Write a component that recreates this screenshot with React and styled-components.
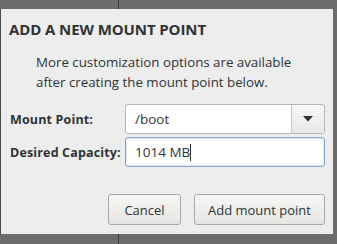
import React from 'react';
import styled, { createGlobalStyle } from 'styled-components';

const GlobalStyle = createGlobalStyle`
    html, body {
        margin: 0;
        padding: 0;
    }
    body {
        width: 337px;
        height: 244px;
        overflow: hidden;
        font-family: 'Open Sans', 'DejaVu Sans', sans-serif;
        background: linear-gradient(
            to right,
            #6d6d6d 0,
            #6d6d6d 118px,
            #3c3c3c 118px,
            #3c3c3c 119px,
            #6d6d6d 119px
        );
    }
`;

const Page = styled.div`
    padding-top: 9px;
    height: 244px;
    box-sizing: border-box;
`;

const Dialog = styled.div`
    width: 333px;
    height: 225px;
    box-sizing: border-box;
    background: #ededed;
    border-left: 1px solid #4a4a4a;
    display: flex;
    flex-direction: column;
    padding: 11px 8px 0 8px;
    color: #2e3436;
`;

const Title = styled.h1`
    margin: 0;
    font-size: 15px;
    line-height: 18px;
    font-weight: 700;
    letter-spacing: -0.1px;
    color: #2e3436;
`;

const Message = styled.p`
    margin: 14px 0 0 27px;
    font-size: 13.3px;
    line-height: 20px;
    color: #2e3436;
`;

const Form = styled.div`
    display: grid;
    grid-template-columns: 116px 200px;
    row-gap: 3px;
    margin-top: 12px;
    align-items: center;
`;

const Label = styled.label`
    font-size: 12.5px;
    font-weight: 700;
    letter-spacing: 0.15px;
    padding-left: 1px;
    white-space: nowrap;
`;

const Field = styled.div`
    height: 30px;
    box-sizing: border-box;
    border: 1px solid ${(p) => (p.$focused ? '#7fa7d6' : '#b6b6b3')};
    border-radius: 3px;
    background: #fff;
    display: flex;
    align-items: center;
    font-size: 13.5px;
    color: #2e3436;
    box-shadow: ${(p) => (p.$focused ? 'inset 0 0 0 1px #dce8f5' : 'none')};
`;

const FieldText = styled.span`
    flex: 1;
    padding-left: 9px;
`;

const Caret = styled.span`
    display: inline-block;
    width: 1px;
    height: 17px;
    background: #2e3436;
    vertical-align: middle;
    margin-top: -2px;
`;

const ComboButton = styled.div`
    width: 32px;
    align-self: stretch;
    border-left: 1px solid #c8c8c5;
    background: linear-gradient(#f6f6f5, #e8e8e7);
    border-radius: 0 3px 3px 0;
    display: flex;
    align-items: center;
    justify-content: center;
`;

const Buttons = styled.div`
    display: flex;
    justify-content: flex-end;
    gap: 13px;
    margin-top: 27px;
`;

const Button = styled.button`
    width: ${(p) => p.$w}px;
    height: 31px;
    border: 1px solid #a9a9a6;
    border-radius: 3px;
    background: linear-gradient(#f7f7f6, #e5e5e3);
    font-family: inherit;
    font-size: 13px;
    color: #2e3436;
    padding: 0;
`;

export default function App() {
    return (
        <Page>
            <GlobalStyle />
            <Dialog>
                <Title>ADD A NEW MOUNT POINT</Title>
                <Message>
                    More customization options are available
                    <br />
                    after creating the mount point below.
                </Message>
                <Form>
                    <Label>Mount Point:</Label>
                    <Field>
                        <FieldText>/boot</FieldText>
                        <ComboButton>
                            <svg width="10" height="6" viewBox="0 0 10 6">
                                <path d="M0 0 L10 0 L5 5.5 Z" fill="#2e3436" />
                            </svg>
                        </ComboButton>
                    </Field>
                    <Label>Desired Capacity:</Label>
                    <Field $focused>
                        <FieldText>
                            1014 MB
                            <Caret />
                        </FieldText>
                    </Field>
                </Form>
                <Buttons>
                    <Button $w={73}>Cancel</Button>
                    <Button $w={131}>Add mount point</Button>
                </Buttons>
            </Dialog>
        </Page>
    );
}
